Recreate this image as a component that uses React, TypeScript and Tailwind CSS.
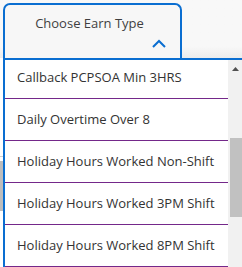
import React from "react";

const items = [
  "Callback PCPSOA Min 3HRS",
  "Daily Overtime Over 8",
  "Holiday Hours Worked Non-Shift",
  "Holiday Hours Worked 3PM Shift",
  "Holiday Hours Worked 8PM Shift",
];

export default function App() {
  return (
    <div
      className="w-[242px] h-[267px] overflow-hidden bg-white flex flex-col"
      style={{ fontFamily: '"Open Sans", "Noto Sans", sans-serif' }}
    >
      {/* top area */}
      <div className="h-[58px] flex shrink-0 bg-gradient-to-b from-[#f8f8f8] from-80% to-[#ececec]">
        <div className="w-[3px] shrink-0" />
        <div className="mt-[3px] w-[179px] h-[57px] rounded-t-[7px] border-2 border-b-0 border-[#0a6ed1] bg-[#f7f7f7] flex flex-col items-center">
          <div className="mt-[8px] text-[13px] leading-[20px] text-[#3f3f3f] pr-[6px]">Choose Earn Type</div>
          <div className="self-end mr-[14px] mt-[6px]">
            <svg width="14" height="9" viewBox="0 0 14 9">
              <path d="M1 8 L7 2 L13 8" fill="none" stroke="#0a6ed1" strokeWidth="2" />
            </svg>
          </div>
        </div>
      </div>
      {/* list */}
      <div className="flex flex-1 min-h-0">
        <div className="w-[3px] shrink-0 flex flex-col">
          <div className="h-[98px]" />
          <div className="h-[1px] bg-[#d0d0d0]" />
          <div className="h-[4px]" />
          <div className="h-[50px] bg-[#bdbdbd]" />
        </div>
        <div className="flex-1 border-t-2 border-l-2 border-[#0a6ed1] flex min-w-0">
          <div className="flex-1 overflow-hidden bg-white">
            <div className="mt-[-3px]">
              {items.map((t) => (
                <div
                  key={t}
                  className="h-[42px] border-b border-[#74288a] flex items-center pl-[12px] text-[13px] text-[#333333] whitespace-nowrap"
                >
                  {t}
                </div>
              ))}
            </div>
          </div>
          <div className="w-[14px] shrink-0 bg-[#f1f1f1] flex flex-col">
            <div className="h-[17px] flex items-center justify-center">
              <svg width="7" height="4" viewBox="0 0 7 4">
                <path d="M0 4 L3.5 0 L7 4 Z" fill="#505050" />
              </svg>
            </div>
            <div className="mt-[61px] ml-[2px] h-[79px] bg-[#c1c1c1]" />
          </div>
        </div>
      </div>
    </div>
  );
}
